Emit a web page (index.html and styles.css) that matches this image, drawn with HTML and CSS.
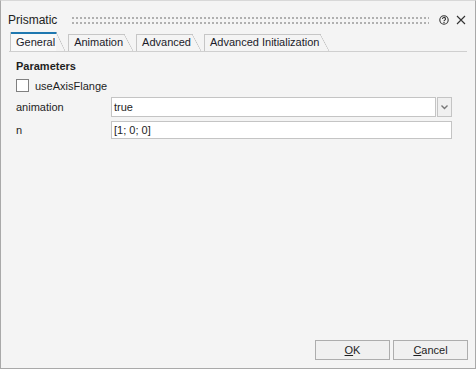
FILE: index.html
```html
<!DOCTYPE html>
<html>
<head>
<title>Prismatic</title>
<link rel="stylesheet" href="styles.css">
</head>
<body>

<div class="window">
	<div class="titlebar">
		<span class="title">Prismatic</span>
		<span class="grip"></span>
		<svg class="help" width="10" height="10" viewBox="0 0 10 10">
			<circle cx="5" cy="5" r="4.2" fill="none" stroke="#333" stroke-width="1.1"/>
			<path d="M3.5 4 A1.5 1.5 0 1 1 5.6 5.3 C5.1 5.6 5 5.8 5 6.3" fill="none" stroke="#333" stroke-width="1.1"/>
			<rect x="4.4" y="7" width="1.2" height="1.2" fill="#333"/>
		</svg>
		<svg class="close" width="10" height="10" viewBox="0 0 10 10">
			<path d="M1 1 L9 9 M9 1 L1 9" stroke="#333" stroke-width="1.1"/>
		</svg>
	</div><!-- end titlebar -->

	<div class="tabs">
		<div class="tab active">General</div>
		<div class="tab">Animation</div>
		<div class="tab">Advanced</div>
		<div class="tab">Advanced Initialization</div>
	</div><!-- end tabs -->

	<div class="panel">
		<div class="heading">Parameters</div>
		<label class="check"><span class="box"></span>useAxisFlange</label>

		<div class="fields">
			<div class="label">animation</div>
			<div class="select">
				<div class="value">true</div>
				<div class="drop">
					<svg width="7" height="5" viewBox="0 0 7 5"><path d="M0.5 0.5 L3.5 3.5 L6.5 0.5" fill="none" stroke="#777" stroke-width="1.4"/></svg>
				</div>
			</div>

			<div class="label">n</div>
			<div class="input">[1; 0; 0]</div>
		</div><!-- end fields -->
	</div><!-- end panel -->

	<div class="footer">
		<button><u>O</u>K</button>
		<button><u>C</u>ancel</button>
	</div><!-- end footer -->
</div><!-- end window -->

</body>
</html>
```

FILE: styles.css
```css
html, body {
margin: 0;
padding: 0;
}

body {
font-family: "Liberation Sans", Arial, sans-serif;
font-size: 11px;
color: #1e1e1e;
background: #f4f4f4;
}

.window {
box-sizing: border-box;
width: 476px;
height: 369px;
border: 1px solid #a9a9a9;
border-top-color: #d8d8d8;
background: #f4f4f4;
display: flex;
flex-direction: column;
}

/* title bar */
.titlebar {
display: flex;
align-items: center;
height: 16px;
padding: 11px 0 0 7px;
}
.title {
font-size: 12px;
color: #222;
line-height: 14px;
}
.grip {
flex: 1;
height: 7px;
margin: 0 10px 0 15px;
background:
  linear-gradient(90deg, #b0b0b0 0 2px, transparent 2px 4px) 0 0 / 4px 2px repeat-x,
  linear-gradient(90deg, #b0b0b0 0 2px, transparent 2px 4px) 0 5px / 4px 2px repeat-x;
}
.help {
margin-right: 7px;
}
.close {
margin-right: 9px;
}

/* tabs */
.tabs {
display: flex;
align-items: flex-end;
height: 19px;
margin: 4px 8px 0 8px;
border-bottom: 1px solid #cfcfcf;
}
.tab {
position: relative;
height: 17px;
line-height: 17px;
padding: 0 10px 0 5px;
margin-right: 3px;
border-left: 1px solid #c6c6c6;
color: #1b1b2a;
}
.tab:first-child {
margin-left: 1px;
}
.tab::before {
content: "";
position: absolute;
left: 0;
right: 8px;
top: 0;
border-top: 1px solid #c6c6c6;
}
.tab::after {
content: "";
position: absolute;
right: 0;
top: 0;
width: 9px;
height: 100%;
background: linear-gradient(to top right, transparent calc(50% - 0.6px), #c2c2c2 50%, transparent calc(50% + 0.6px));
}
.tab.active {
height: 19px;
line-height: 20px;
background: linear-gradient(to left, transparent 9px, #f9f9f9 9px);
}
.tab.active::before {
border-top: 2px solid #1f78b0;
}

/* panel */
.panel {
flex: 1;
padding: 7px 23px 0 15px;
}
.heading {
font-weight: bold;
line-height: 14px;
}
.check {
display: flex;
align-items: center;
margin-top: 6px;
height: 13px;
}
.box {
box-sizing: border-box;
width: 13px;
height: 13px;
border: 1px solid #808080;
background: #fff;
margin-right: 6px;
}
.fields {
display: grid;
grid-template-columns: 95px 1fr;
row-gap: 4px;
align-items: center;
margin-top: 5px;
}
.select {
display: flex;
height: 20px;
}
.value {
flex: 1;
box-sizing: border-box;
height: 20px;
line-height: 18px;
padding-left: 2px;
background: #fff;
border: 1px solid #c4c4c4;
}
.drop {
box-sizing: border-box;
width: 15px;
height: 20px;
margin-left: 1px;
border: 1px solid #c4c4c4;
background: #f0f0f0;
display: flex;
align-items: center;
justify-content: center;
}
.input {
box-sizing: border-box;
height: 18px;
line-height: 16px;
padding-left: 2px;
background: #fff;
border: 1px solid #c4c4c4;
}

/* buttons */
.footer {
display: flex;
justify-content: flex-end;
gap: 3px;
padding: 0 7px 8px 0;
}
button {
width: 75px;
height: 20px;
font-family: "Liberation Sans", Arial, sans-serif;
font-size: 11px;
color: #1e1e1e;
background: #f0f0f0;
border: 1px solid #adadad;
padding: 0;
}
```
